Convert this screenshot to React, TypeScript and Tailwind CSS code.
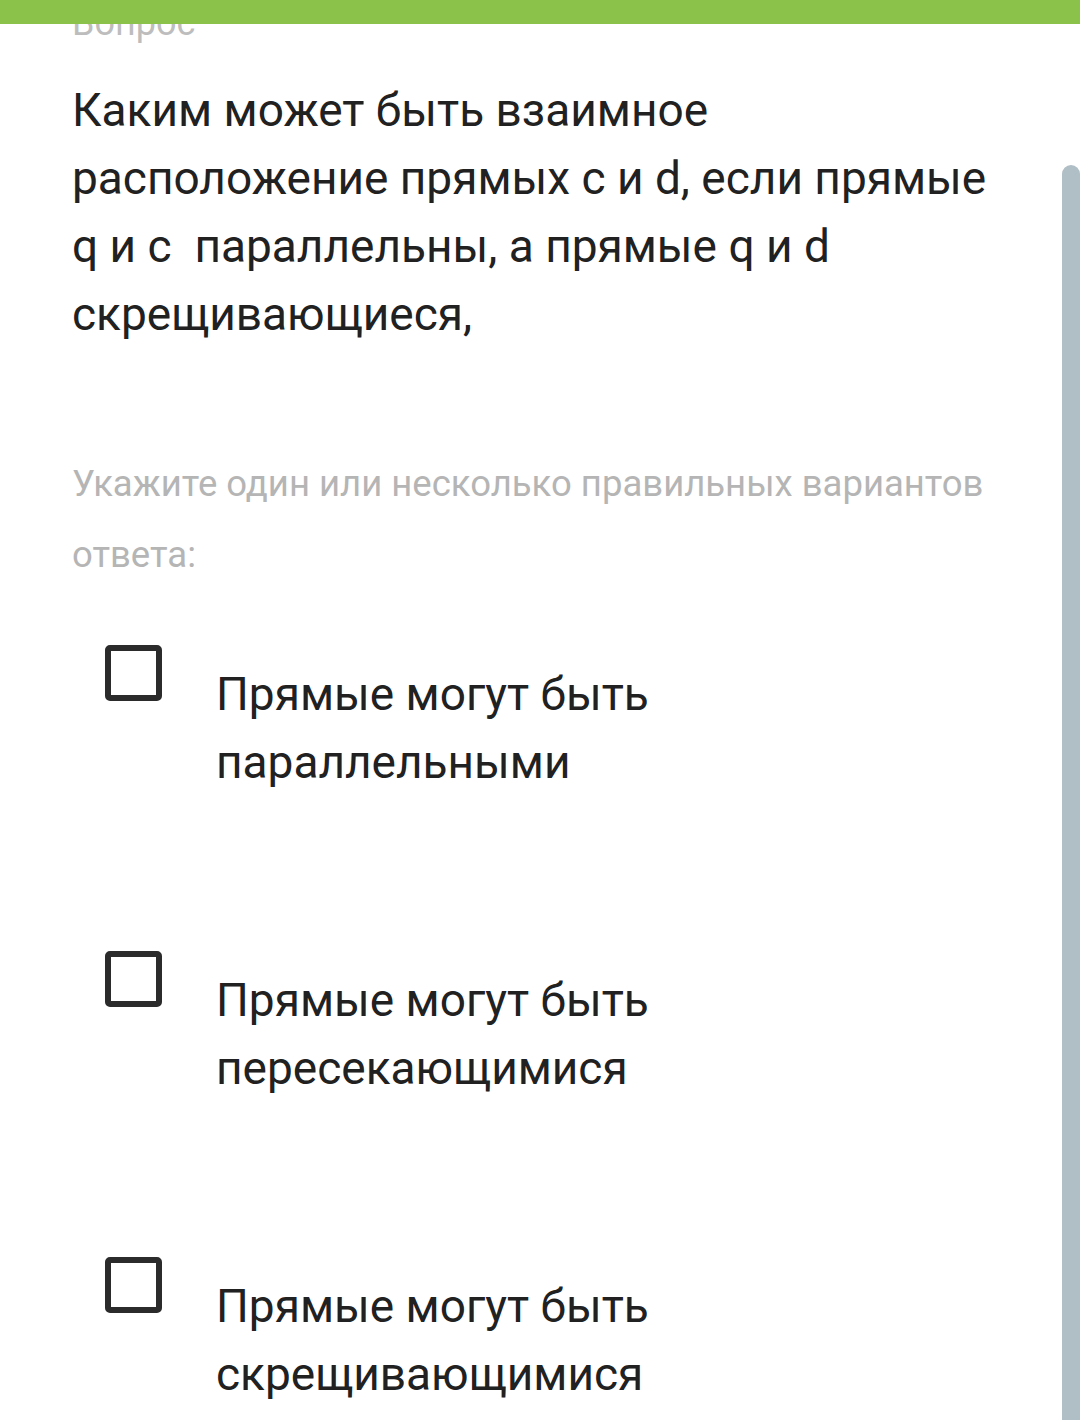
import React from 'react';

const options = [
  'Прямые могут быть параллельными',
  'Прямые могут быть пересекающимися',
  'Прямые могут быть скрещивающимися',
];

const Checkbox: React.FC = () => (
  <div className="w-[57px] h-[56px] shrink-0 border-[6px] border-[#2b2b2b] rounded-[5px] bg-white" />
);

export default function App() {
  return (
    <div
      className="relative w-[1080px] h-[1420px] overflow-hidden bg-white text-[#212121]"
      style={{ fontFamily: 'Roboto, "Noto Sans", sans-serif' }}
    >
      {/* top progress bar lies over the scrolled content */}
      <div className="absolute top-0 left-0 right-0 h-[24px] bg-[#8bc34a] z-10" />
      {/* scrollbar thumb */}
      <div className="absolute right-0 top-[165px] bottom-0 w-[18px] rounded-t-full bg-[#b0bec5]" />

      <div className="pl-[72px]">
        <div className="pt-[3px] text-[36px] leading-[40px] text-[#bdbdbd]">Вопрос</div>

        <p className="mt-[33px] w-[930px] text-[46px] leading-[68px]">
          Каким может быть взаимное расположение прямых с и d, если прямые q и с{'\u00a0'} параллельны, а прямые q и d скрещивающиеся,
        </p>

        <p className="mt-[100px] w-[930px] text-[36.5px] leading-[71px] text-[#b5b5b5]">
          Укажите один или несколько правильных вариантов ответа:
        </p>

        <div className="mt-[55px] flex flex-col gap-[155px] pl-[33px]">
          {options.map((o) => (
            <label key={o} className="flex items-start gap-[54px]">
              <Checkbox />
              <span className="pt-[15px] w-[520px] text-[46px] leading-[68px]">{o}</span>
            </label>
          ))}
        </div>
      </div>
    </div>
  );
}
